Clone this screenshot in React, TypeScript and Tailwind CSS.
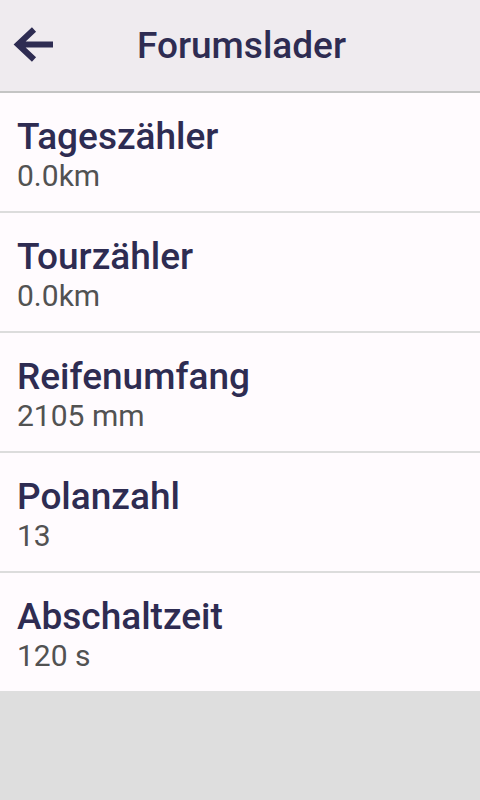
const rows = [
  { title: "Tageszähler", value: "0.0km" },
  { title: "Tourzähler", value: "0.0km" },
  { title: "Reifenumfang", value: "2105 mm" },
  { title: "Polanzahl", value: "13" },
  { title: "Abschaltzeit", value: "120 s" },
];

function BackArrow() {
  return (
    <svg width="40" height="36" viewBox="0 0 40 36" fill="none" className="text-[#2e2c52]">
      <path d="M40 17.5H5M21 2.5L5 17.5L21 32.5" stroke="currentColor" strokeWidth="6" strokeLinejoin="miter" />
    </svg>
  );
}

export default function App() {
  return (
    <div className="flex h-[800px] w-[480px] flex-col bg-[#dedede] font-['Roboto',sans-serif]">
      {/* Top bar */}
      <div className="relative flex h-[93px] shrink-0 items-center justify-center border-b-2 border-[#c4c4c4] bg-[#efebef]">
        <button className="absolute left-[13px] top-[27px]">
          <BackArrow />
        </button>
        <span className="pl-[3px] text-[37px] leading-[40px] font-medium text-[#2e2c52]">Forumslader</span>
      </div>

      {/* Settings list */}
      <div className="flex flex-col bg-[#fffbfe]">
        {rows.map((row, i) => (
          <div
            key={row.title}
            className={
              i < rows.length - 1
                ? "flex h-[120px] flex-col border-b-2 border-[#dcdcdc] pl-[17px] pt-[24px]"
                : "flex h-[118px] flex-col pl-[17px] pt-[24px]"
            }
          >
            <span className="text-[37px] leading-[40px] font-medium text-[#2e2c52]">{row.title}</span>
            <span className="text-[30px] leading-[37px] text-[#525252]">{row.value}</span>
          </div>
        ))}
      </div>
    </div>
  );
}
